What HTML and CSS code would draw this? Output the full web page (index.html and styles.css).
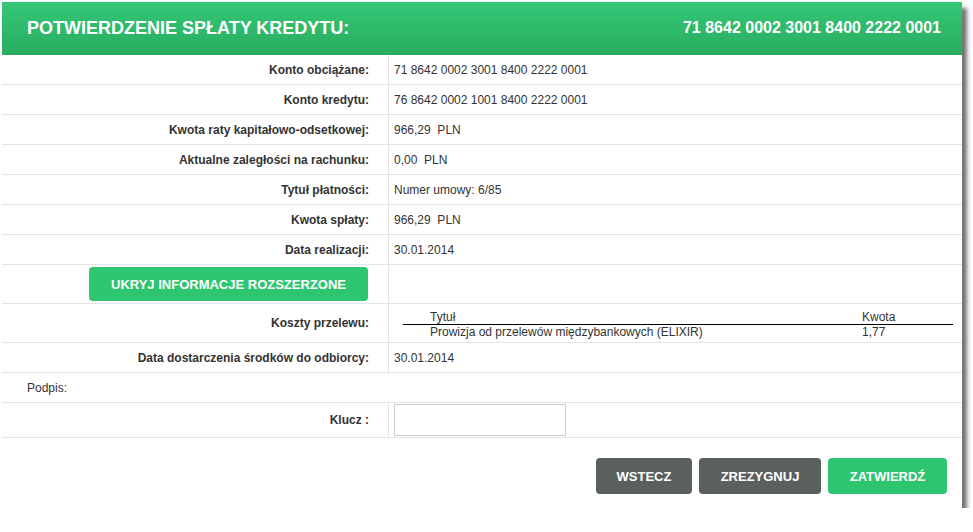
FILE: index.html
```html
<!DOCTYPE html>
<html lang="pl">
<head>
<meta charset="utf-8">
<link rel="stylesheet" href="styles.css">
</head>
<body>
<div class="panel">
  <div class="header">
    <span class="title">POTWIERDZENIE SPŁATY KREDYTU:</span>
    <span class="acct">71 8642 0002 3001 8400 2222 0001</span>
  </div>
  <div class="row"><div class="lbl">Konto obciążane:</div><div class="val">71 8642 0002 3001 8400 2222 0001</div></div>
  <div class="row"><div class="lbl">Konto kredytu:</div><div class="val">76 8642 0002 1001 8400 2222 0001</div></div>
  <div class="row"><div class="lbl">Kwota raty kapitałowo-odsetkowej:</div><div class="val">966,29&nbsp; PLN</div></div>
  <div class="row"><div class="lbl">Aktualne zaległości na rachunku:</div><div class="val">0,00&nbsp; PLN</div></div>
  <div class="row"><div class="lbl">Tytuł płatności:</div><div class="val">Numer umowy: 6/85</div></div>
  <div class="row"><div class="lbl">Kwota spłaty:</div><div class="val">966,29&nbsp; PLN</div></div>
  <div class="row"><div class="lbl">Data realizacji:</div><div class="val">30.01.2014</div></div>
  <div class="row row-btn"><div class="lbl lbl-btn"><span class="btn btn-green btn-wide">UKRYJ INFORMACJE ROZSZERZONE</span></div><div class="val"></div></div>
  <div class="row row-costs"><div class="lbl">Koszty przelewu:</div>
    <div class="val val-costs">
      <div class="costs">
        <div class="c-head"><span class="c-t">Tytuł</span><span class="c-k">Kwota</span></div>
        <div class="c-row"><span class="c-t">Prowizja od przelewów międzybankowych (ELIXIR)</span><span class="c-k">1,77</span></div>
      </div>
    </div>
  </div>
  <div class="row"><div class="lbl">Data dostarczenia środków do odbiorcy:</div><div class="val">30.01.2014</div></div>
  <div class="row row-sign"><div class="sign">Podpis:</div></div>
  <div class="row row-key"><div class="lbl">Klucz :</div><div class="val"><div class="input"></div></div></div>
  <div class="actions">
    <span class="btn btn-gray btn-back">WSTECZ</span>
    <span class="btn btn-gray btn-cancel">ZREZYGNUJ</span>
    <span class="btn btn-green btn-ok">ZATWIERDŹ</span>
  </div>
</div>
</body>
</html>
```
FILE: styles.css
```css
* { box-sizing: border-box; }
body {
  margin: 0;
  background: #fff;
  font-family: "Liberation Sans", Arial, sans-serif;
  font-size: 12px;
  color: #333;
}
.panel {
  margin: 2px 0 0 2px;
  width: 960px;
  height: 506px;
  background: #fff;
  box-shadow: 5px 6px 4px rgba(0,0,0,0.55);
  display: flex;
  flex-direction: column;
}
.header {
  height: 53px;
  flex: none;
  background: linear-gradient(#34c677, #29ad60);
  display: flex;
  align-items: center;
  justify-content: space-between;
  padding: 0 21px 0 25px;
  color: #fff;
  font-weight: bold;
  border-bottom: 1px solid #2aa85e;
}
.title { font-size: 18px; }
.acct { font-size: 16px; }
.row {
  display: flex;
  flex: none;
  height: 30px;
  border-bottom: 1px solid #e4e4e4;
}
.lbl {
  width: 387px;
  flex: none;
  text-align: right;
  padding-right: 19px;
  font-weight: bold;
  border-right: 1px solid #e4e4e4;
  display: flex;
  align-items: center;
  justify-content: flex-end;
}
.val {
  flex: 1;
  display: flex;
  align-items: center;
  padding-left: 5px;
}
.row-btn { height: 39px; }
.lbl-btn { justify-content: flex-start; padding-left: 87px; padding-right: 0; }
.btn {
  display: inline-flex;
  align-items: center;
  justify-content: center;
  color: #fff;
  font-weight: bold;
  font-size: 13px;
  border-radius: 4px;
}
.btn-green { background: #2ec571; }
.btn-gray { background: #5a605d; }
.btn-wide { width: 279px; height: 34px; }
.row-costs { height: 39px; }
.val-costs { padding-left: 14px; padding-right: 9px; align-items: stretch; }
.costs { flex: 1; display: flex; flex-direction: column; justify-content: center; padding-top: 3px; }
.c-head, .c-row { display: flex; line-height: 14px; }
.c-head { border-bottom: 1px solid #000; }
.c-t { width: 459px; padding-left: 27px; }
.c-k { flex: 1; }
.row-sign { height: 30px; }
.sign { padding-left: 25px; display: flex; align-items: center; }
.row-key { height: 35px; }
.input {
  width: 172px;
  height: 32px;
  border: 1px solid #ccc;
}
.actions {
  display: flex;
  justify-content: flex-end;
  gap: 7px;
  padding: 20px 15px 0 0;
}
.actions .btn { height: 36px; }
.btn-back { width: 96px; }
.btn-cancel { width: 122px; }
.btn-ok { width: 119px; }
```
